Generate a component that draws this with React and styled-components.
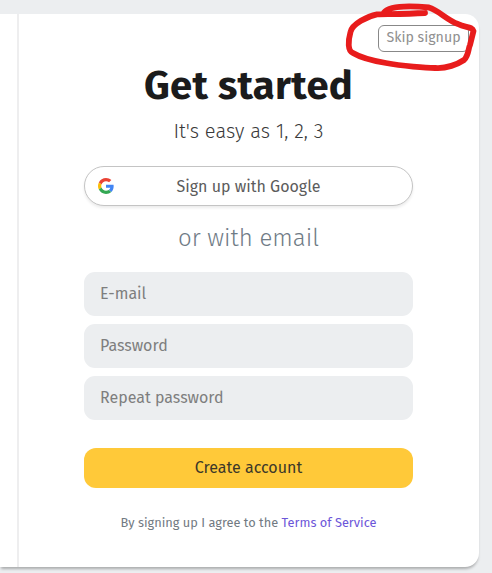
import React from "react";
import styled, { createGlobalStyle } from "styled-components";

const GlobalStyle = createGlobalStyle`
  *, *::before, *::after { box-sizing: border-box; }
  body {
    margin: 0;
    background: #eceef0;
    font-family: "Fira Sans", "Noto Sans", "Open Sans", sans-serif;
    overflow: hidden;
  }
`;

const Page = styled.div`
  height: 573px;
  width: 492px;
  padding: 14px 13px 6px 0;
  overflow: hidden;
`;

const Card = styled.main`
  display: flex;
  height: 553px;
  background: #fff;
  border-radius: 0 14px 14px 0;
  box-shadow: 0 3px 3px -1px rgba(0, 0, 0, 0.28);
`;

const SidePanel = styled.aside`
  width: 19px;
  flex: none;
  border-right: 2px solid #eeeeef;
`;

const SignupPanel = styled.section`
  position: relative;
  flex: 1;
  display: flex;
  flex-direction: column;
  padding: 47px 66px 0 65px;
  text-align: center;
`;

const Title = styled.h1`
  margin: 0;
  height: 50px;
  font-size: 40px;
  line-height: 51px;
  font-weight: 700;
  letter-spacing: 0.3px;
  color: #1b1b1b;
  white-space: nowrap;
`;

const Subtitle = styled.p`
  margin: 6px 0 0;
  height: 28px;
  font-size: 20px;
  line-height: 28px;
  font-weight: 300;
  letter-spacing: 0.1px;
  color: #3a3a3a;
  white-space: nowrap;
`;

const GoogleButton = styled.button`
  display: grid;
  grid-template-columns: 16px 1fr 16px;
  align-items: center;
  height: 40px;
  margin-top: 21px;
  padding: 0 13px;
  border: 1px solid #c4c4c4;
  border-radius: 20px;
  background: #fff;
  box-shadow: 0 2px 3px rgba(0, 0, 0, 0.08);
  font: 400 16px/22px "Fira Sans", "Noto Sans", sans-serif;
  color: #5c5c5c;
`;

const GoogleLabel = styled.span`
  padding-top: 2px;
`;

const Divider = styled.h2`
  margin: 15px 0 0;
  height: 34px;
  font-size: 24px;
  line-height: 34px;
  font-weight: 300;
  color: #6f7b86;
  white-space: nowrap;
`;

const Form = styled.form`
  display: flex;
  flex-direction: column;
  gap: 8px;
  margin-top: 17px;
`;

const Field = styled.input`
  width: 100%;
  height: 44px;
  padding: 0 16px 1px;
  border: 0;
  border-radius: 11px;
  background: #eceef0;
  font: 400 16px/22px "Fira Sans", "Noto Sans", sans-serif;
  &::placeholder { color: #7e7e7e; opacity: 1; }
`;

const SubmitButton = styled.button`
  height: 40px;
  margin-top: 20px;
  padding: 0 0 1px;
  border: 0;
  border-radius: 12px;
  background: #ffc939;
  font: 400 16px/22px "Fira Sans", "Noto Sans", sans-serif;
  color: #3c3829;
`;

const Terms = styled.p`
  margin: 25px 0 0;
  font-size: 12.8px;
  line-height: 20px;
  color: #727a82;
  white-space: nowrap;
`;

const TermsLink = styled.a`
  color: #6c56d9;
`;

const SkipButton = styled.button`
  position: absolute;
  top: 11px;
  right: 10px;
  width: 91px;
  height: 27px;
  padding: 0 0 2px;
  border: 1px solid #888;
  border-radius: 6px;
  background: #fff;
  font: 400 14.2px/20px "Fira Sans", "Noto Sans", sans-serif;
  color: #909090;
  white-space: nowrap;
`;

const Scribble = styled.svg`
  position: absolute;
  top: -14px;
  right: -13px;
  width: 160px;
  height: 80px;
  pointer-events: none;
`;

const GoogleLogo = () => (
  <svg width="16" height="16" viewBox="0 0 48 48" aria-hidden="true">
    <path fill="#EA4335" d="M24 9.5c3.54 0 6.71 1.22 9.21 3.6l6.85-6.85C35.9 2.38 30.47 0 24 0 14.62 0 6.51 5.38 2.56 13.22l7.98 6.19C12.43 13.72 17.74 9.5 24 9.5z" />
    <path fill="#4285F4" d="M46.98 24.55c0-1.57-.15-3.09-.38-4.55H24v9.02h12.94c-.58 2.96-2.26 5.48-4.78 7.18l7.73 6c4.51-4.18 7.09-10.36 7.09-17.65z" />
    <path fill="#FBBC05" d="M10.53 28.59A14.5 14.5 0 0 1 9.77 24c0-1.6.27-3.14.76-4.59l-7.98-6.19A23.9 23.9 0 0 0 0 24c0 3.88.92 7.54 2.56 10.78l7.97-6.19z" />
    <path fill="#34A853" d="M24 48c6.48 0 11.93-2.13 15.89-5.81l-7.73-6c-2.15 1.45-4.92 2.3-8.16 2.3-6.26 0-11.57-4.22-13.47-9.91l-7.98 6.19C6.51 42.62 14.62 48 24 48z" />
  </svg>
);

const fields = [
  { label: "E-mail", type: "email" },
  { label: "Password", type: "password" },
  { label: "Repeat password", type: "password" },
];

export default function App() {
  return (
    <>
      <GlobalStyle />
      <Page>
        <Card>
          <SidePanel />
          <SignupPanel>
            <Title>Get started</Title>
            <Subtitle>It's easy as 1, 2, 3</Subtitle>
            <GoogleButton type="button">
              <GoogleLogo />
              <GoogleLabel>Sign up with Google</GoogleLabel>
            </GoogleButton>
            <Divider>or with email</Divider>
            <Form>
              {fields.map((f) => (
                <Field key={f.label} type={f.type} placeholder={f.label} />
              ))}
              <SubmitButton type="button">Create account</SubmitButton>
            </Form>
            <Terms>
              By signing up I agree to the <TermsLink>Terms of Service</TermsLink>
            </Terms>
            <SkipButton type="button">Skip signup</SkipButton>
            <Scribble viewBox="0 0 160 80" fill="none" stroke="#e81c1c" strokeWidth="5.8" strokeLinecap="round" strokeLinejoin="round">
              <path d="M93 13C76 14 60 14 45 14.3C36 16 20 24 18.5 32C16 41 15.5 51 21 53C31 59 42 61 54 63C70 66 94 68 103 68C114 69 126 64 132 60C137 55 136 49 138 45L141.5 31C140 26 133 28 126 24C115 20 106 10 97 7.5C83 6 58 5 52 12.5" />
            </Scribble>
          </SignupPanel>
        </Card>
      </Page>
    </>
  );
}
